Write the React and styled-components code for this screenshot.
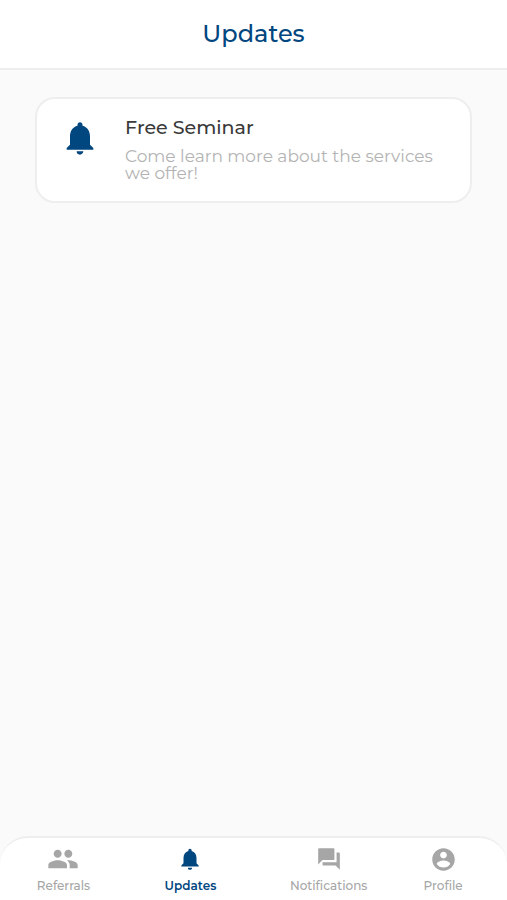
import React from "react";
import styled, { createGlobalStyle } from "styled-components";
import { MdForum, MdNotifications, MdPeople } from "react-icons/md";

const GlobalStyle = createGlobalStyle`
  * {
    box-sizing: border-box;
  }
  body {
    margin: 0;
    background: #fafafa;
    font-family: Montserrat, Inter, sans-serif;
  }
  h1, h2, p {
    margin: 0;
  }
`;

function ProfileIcon(props) {
  const { size } = props;
  return (
    <svg width={size} height={size} viewBox="0 0 24 24" fill="currentColor" aria-hidden="true">
      <path d="M12 2C6.48 2 2 6.48 2 12s4.48 10 10 10 10-4.48 10-10S17.52 2 12 2zm0 3c1.66 0 3 1.34 3 3s-1.34 3-3 3-3-1.34-3-3 1.34-3 3-3zm0 14.2c-2.5 0-4.71-1.28-6-3.22.03-1.99 4-3.08 6-3.08 1.99 0 5.97 1.09 6 3.08-1.29 1.94-3.5 3.22-6 3.22z" />
    </svg>
  );
}

const updates = [
  {
    title: "Free Seminar",
    text: "Come learn more about the services we offer!",
  },
];

const tabs = [
  { label: "Referrals", icon: <MdPeople size={32} /> },
  { label: "Updates", icon: <MdNotifications size={26} />, active: true },
  { label: "Notifications", icon: <MdForum size={26} /> },
  { label: "Profile", icon: <ProfileIcon size={27} /> },
];

function Update(props) {
  const { title, text } = props;
  return (
    <Card>
      <CardIcon>
        <MdNotifications size={40} />
      </CardIcon>
      <div>
        <CardTitle>{title}</CardTitle>
        <CardText>{text}</CardText>
      </div>
    </Card>
  );
}

function App() {
  return (
    <Screen>
      <GlobalStyle />
      <Header>
        <Title>Updates</Title>
      </Header>
      <Content>
        {updates.map((update) => (
          <Update key={update.title} title={update.title} text={update.text} />
        ))}
      </Content>
      <TabBar>
        {tabs.map((tab) => (
          <Tab
            key={tab.label}
            href={"#" + tab.label.toLowerCase()}
            $active={tab.active}
            aria-current={tab.active ? "page" : undefined}
          >
            <TabIcon>{tab.icon}</TabIcon>
            {tab.label}
          </Tab>
        ))}
      </TabBar>
    </Screen>
  );
}

const Screen = styled.div`
  min-height: 100vh;
  display: flex;
  flex-direction: column;
`;
const Header = styled.header`
  padding: 18px 0;
  background: #ffffff;
  border-bottom: 2px solid #eeeeee;
  text-align: center;
`;
const Title = styled.h1`
  color: #00467f;
  font-size: 24px;
  font-weight: 500;
  line-height: 32px;
`;
const Content = styled.main`
  flex: 1;
  padding: 27px 35px;
`;
const Card = styled.article`
  display: flex;
  padding: 17px 23px 19px;
  background: #ffffff;
  border: 2px solid #eeeeee;
  border-radius: 20px;
`;
const CardIcon = styled.div`
  margin-right: 25px;
  padding-top: 2px;
  color: #00467f;

  svg {
    display: block;
  }
`;
const CardTitle = styled.h2`
  margin-bottom: 8px;
  color: #3a3a3a;
  font-size: 19px;
  font-weight: 500;
  line-height: 24px;
`;
const CardText = styled.p`
  color: #b3b3b3;
  font-size: 17px;
  line-height: 17px;
`;
const TabBar = styled.nav`
  display: grid;
  grid-template-columns: 51fr 51fr 60fr 32fr;
  padding: 5px 24px 4px 0;
  background: #ffffff;
  border-top: 2px solid #eeeeee;
  border-radius: 28px 28px 0 0;
`;
const Tab = styled.a`
  display: flex;
  flex-direction: column;
  align-items: center;
  color: ${props => props.$active ? "#00467f" : "#a6a6a6"};
  font-size: 12px;
  font-weight: ${props => props.$active ? 600 : 500};
  line-height: 21px;
  text-decoration: none;
`;
const TabIcon = styled.span`
  display: flex;
  align-items: center;
  height: 32px;
`;

export default App;
